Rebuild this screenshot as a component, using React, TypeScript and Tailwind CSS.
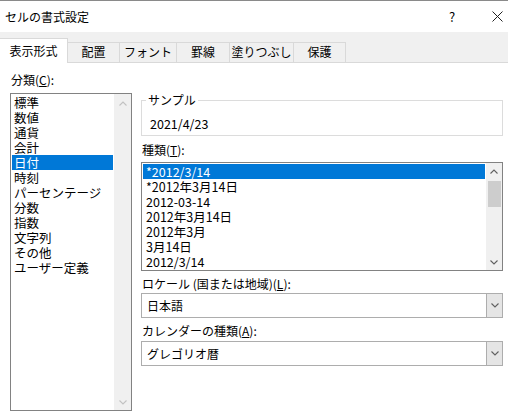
import React from "react";

const categories = ["標準", "数値", "通貨", "会計", "日付", "時刻", "パーセンテージ", "分数", "指数", "文字列", "その他", "ユーザー定義"];
const types = ["*2012/3/14", "*2012年3月14日", "2012-03-14", "2012年3月14日", "2012年3月", "3月14日", "2012/3/14"];
const tabs = [
  { label: "配置", w: "w-[52px]" },
  { label: "フォント", w: "w-[57px]" },
  { label: "罫線", w: "w-[53px]" },
  { label: "塗りつぶし", w: "w-[64px]" },
  { label: "保護", w: "w-[52px]" },
];

function Chevron({ up, color }: { up?: boolean; color: string }) {
  return (
    <svg width="8" height="5" viewBox="0 0 8 5" fill="none">
      <path d={up ? "M0.5 4.5 L4 1 L7.5 4.5" : "M0.5 0.5 L4 4 L7.5 0.5"} stroke={color} strokeWidth="1.1" />
    </svg>
  );
}

function Dropdown({ value }: { value: string }) {
  return (
    <div className="flex h-[25px] border border-[#adadad] bg-white">
      <div className="flex flex-1 items-center pl-[5px]">{value}</div>
      <div className="flex w-[16px] items-center justify-center border-l border-[#adadad] bg-[#e5e5e5]">
        <Chevron color="#606060" />
      </div>
    </div>
  );
}

export default function App() {
  return (
    <div
      className="relative h-[415px] w-[508px] overflow-hidden bg-white text-[12px] text-black"
      style={{ fontFamily: '"Noto Sans CJK JP", "Noto Sans", sans-serif' }}
    >
      {/* title bar */}
      <div className="flex h-[32px] items-center border-t border-[#8a8a8a]">
        <div className="flex-1 pl-[5px] pt-[1px] text-[12px]">セルの書式設定</div>
        <div className="w-[20px] text-center text-[13px]">?</div>
        <div className="ml-[25px] mr-[1px] flex h-[20px] w-[20px] items-center justify-center">
          <svg width="11" height="11" viewBox="0 0 11 11">
            <path d="M0.5 0.5 L10.5 10.5 M10.5 0.5 L0.5 10.5" stroke="#222" strokeWidth="1" />
          </svg>
        </div>
      </div>

      {/* tabs */}
      <div className="flex h-[31px] items-end bg-[#f0f0f0]">
        <div className="relative z-10 flex h-[25px] w-[68px] items-center justify-center border-r border-t border-[#d9d9d9] bg-white pb-[1px]">
          表示形式
        </div>
        {tabs.map((t) => (
          <div
            key={t.label}
            className={`flex h-[21px] ${t.w} items-center justify-center border-b border-r border-t border-[#d9d9d9] pb-[1px]`}
          >
            {t.label}
          </div>
        ))}
        <div className="h-[1px] flex-1 bg-[#d9d9d9]" />
      </div>

      {/* content */}
      <div className="flex pl-[10px]">
        {/* left column */}
        <div className="w-[122px]">
          <div className="mt-[9px] h-[15px] pl-[1px] leading-[15px]">
            分類(<span className="underline">C</span>):
          </div>
          <div className="mt-[6px] flex h-[318px] border border-[#828282]">
            <div className="flex-1 px-[1px] pt-[1px]">
              {categories.map((c) => (
                <div
                  key={c}
                  className={`h-[15px] pl-[2px] text-[12.5px] leading-[15px] ${c === "日付" ? "bg-[#0078d7] text-white" : ""}`}
                >
                  {c}
                </div>
              ))}
            </div>
            <div className="flex w-[17px] flex-col items-center justify-between bg-[#f0f0f0] pb-[5px] pt-[7px]">
              <Chevron up color="#c2c2c2" />
              <Chevron color="#c2c2c2" />
            </div>
          </div>
        </div>

        {/* right column */}
        <div className="ml-[9px] w-[362px]">
          <div className="relative mt-[37px] flex h-[36px] items-end border border-[#dcdcdc] pb-[4px] pl-[8px]">
            <span className="absolute -top-[9px] left-[4px] bg-white px-[2px] leading-[15px]">サンプル</span>
            <span className="text-[12.5px] leading-[15px]">2021/4/23</span>
          </div>

          <div className="mt-[6px] h-[15px] pl-[1px] leading-[15px]">
            種類(<span className="underline">T</span>):
          </div>
          <div className="mt-[5px] flex h-[109px] border border-[#828282]">
            <div className="flex-1 px-[1px] pt-[1px]">
              {types.map((t, i) => (
                <div
                  key={t}
                  className={`h-[15px] pl-[3px] text-[12.5px] leading-[15px] ${i === 0 ? "bg-[#0078d7] text-white" : ""}`}
                >
                  {t}
                </div>
              ))}
            </div>
            <div className="flex w-[16px] flex-col items-center bg-[#f0f0f0] pb-[5px] pt-[6px]">
              <Chevron up color="#606060" />
              <div className="mt-[7px] h-[26px] w-[13px] bg-[#cdcdcd]" />
              <div className="flex-1" />
              <Chevron color="#606060" />
            </div>
          </div>

          <div className="mt-[5px] h-[15px] pl-[1px] leading-[15px]">
            ロケール (国または地域)(<span className="underline">L</span>):
          </div>
          <div className="mt-[2px]">
            <Dropdown value="日本語" />
          </div>

          <div className="mt-[5px] h-[15px] pl-[1px] leading-[15px]">
            カレンダーの種類(<span className="underline">A</span>):
          </div>
          <div className="mt-[3px]">
            <Dropdown value="グレゴリオ暦" />
          </div>
        </div>
      </div>
    </div>
  );
}
